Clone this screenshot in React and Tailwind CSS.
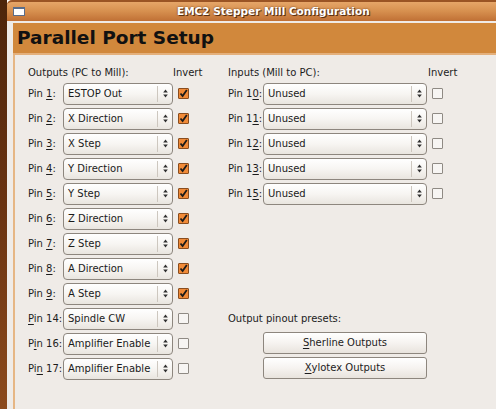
import React from "react";

const outputs = [
  { pre: "Pin ", u: "1", post: ":", value: "ESTOP Out", checked: true },
  { pre: "Pin ", u: "2", post: ":", value: "X Direction", checked: true },
  { pre: "Pin ", u: "3", post: ":", value: "X Step", checked: true },
  { pre: "Pin ", u: "4", post: ":", value: "Y Direction", checked: true },
  { pre: "Pin ", u: "5", post: ":", value: "Y Step", checked: true },
  { pre: "Pin ", u: "6", post: ":", value: "Z Direction", checked: true },
  { pre: "Pin ", u: "7", post: ":", value: "Z Step", checked: true },
  { pre: "Pin ", u: "8", post: ":", value: "A Direction", checked: true },
  { pre: "Pin ", u: "9", post: ":", value: "A Step", checked: true },
  { pre: "", u: "P", post: "in 14:", value: "Spindle CW", checked: false },
  { pre: "P", u: "i", post: "n 16:", value: "Amplifier Enable", checked: false },
  { pre: "Pi", u: "n", post: " 17:", value: "Amplifier Enable", checked: false },
];

const inputs = [
  { pre: "Pin 1", u: "0", post: ":" },
  { pre: "Pin 1", u: "1", post: ":" },
  { pre: "Pin 1", u: "2", post: ":" },
  { pre: "Pin 1", u: "3", post: ":" },
  { pre: "Pin 1", u: "5", post: ":" },
];

const Arrows = () => (
  <svg width="5" height="9" viewBox="0 0 5 9">
    <path d="M2.5 0.5 L4.8 3.5 L0.2 3.5 Z" fill="#2e2e2e" />
    <path d="M2.5 8.5 L4.8 5.5 L0.2 5.5 Z" fill="#2e2e2e" />
  </svg>
);

const Combo = ({ value, width }) => (
  <div
    className={`flex h-[22px] items-center rounded-[4px] border border-[#8d867e] bg-gradient-to-b from-[#ffffff] via-[#f7f5f2] to-[#e9e5df] ${width}`}
  >
    <span className="flex-1 truncate pl-[4px] text-[#1a1a1a]">{value}</span>
    <div className="flex h-[16px] w-[15px] items-center justify-center border-l border-[#cdc7bf]">
      <Arrows />
    </div>
  </div>
);

const Check = ({ checked }) =>
  checked ? (
    <div className="flex h-[11px] w-[11px] items-center justify-center rounded-[1px] border border-[#8a4d1e] bg-[#f08a38]">
      <svg width="9" height="9" viewBox="0 0 9 9">
        <path d="M1.5 4.5 L3.6 7 L7.8 1" stroke="#1a1a1a" strokeWidth="1.8" fill="none" />
      </svg>
    </div>
  ) : (
    <div className="h-[11px] w-[11px] rounded-[1px] border border-[#8f8a84] bg-[#f7f5f3]" />
  );

const Label = ({ pre, u, post }) => (
  <span className="whitespace-pre">
    {pre}
    <u className="underline-offset-[2px]">{u}</u>
    {post}
  </span>
);

const Button = ({ u, rest }) => (
  <div className="flex h-[22px] w-[164px] items-center justify-center rounded-[3px] border border-[#8d867e] bg-gradient-to-b from-[#ffffff] via-[#f6f3f0] to-[#e8e3dd]">
    <span className="whitespace-pre">
      <u className="underline-offset-[2px]">{u}</u>
      {rest}
    </span>
  </div>
);

export default function App() {
  return (
    <div
      className="flex h-[409px] w-[496px] overflow-hidden text-[10px] text-[#1c1c1c]"
      style={{ fontFamily: '"DejaVu Sans", "Liberation Sans", sans-serif' }}
    >
      <div className="w-[7px] bg-gradient-to-b from-[#4d250b] via-[#6a3311] to-[#8c4a1c]" />
      <div className="flex flex-1 flex-col">
        {/* title bar */}
        <div className="relative flex h-[21px] items-center rounded-tl-[5px] border-t-2 border-[#9a5424] bg-gradient-to-b from-[#e6a668] via-[#d68f4e] to-[#c07035]">
          <div className="ml-[6px] h-[9px] w-[12px] border border-[#5a6d8a] border-t-2 bg-white" />
          <div
            className="absolute left-[170px] font-bold text-[10.5px] text-white"
            style={{ textShadow: "1px 1px 0 #5a2e10, 0 0 2px #6a3a18" }}
          >
            EMC2 Stepper Mill Configuration
          </div>
        </div>
        <div className="flex flex-1 flex-col bg-[#efebe7] pt-[2px] pl-[6px]">
          {/* header */}
          <div className="flex h-[32px] items-center border-b-2 border-[#e4b07c] bg-[#d1883c] pl-[4px]">
            <span className="text-[18.5px] font-bold text-[#111]">
              Parallel Port Setup
            </span>
          </div>
          <div className="flex flex-1 border-l-2 border-[#e6b684] pl-[13px] pt-[9px]">
            {/* outputs */}
            <div className="flex w-[200px] flex-col">
              <div className="flex h-[17px] items-center">
                <span className="w-[145px]">Outputs (PC to Mill):</span>
                <span>Invert</span>
              </div>
              {outputs.map((o, i) => (
                <div key={i} className="flex h-[25px] items-center">
                  <div className="w-[35px]">
                    <Label pre={o.pre} u={o.u} post={o.post} />
                  </div>
                  <Combo value={o.value} width="w-[110px]" />
                  <div className="pl-[5px]">
                    <Check checked={o.checked} />
                  </div>
                </div>
              ))}
            </div>
            {/* inputs */}
            <div className="flex flex-col">
              <div className="flex h-[17px] items-center">
                <span className="w-[200px]">Inputs (Mill to PC):</span>
                <span>Invert</span>
              </div>
              {inputs.map((o, i) => (
                <div key={i} className="flex h-[25px] items-center">
                  <div className="w-[35px]">
                    <Label pre={o.pre} u={o.u} post={o.post} />
                  </div>
                  <Combo value="Unused" width="w-[164px]" />
                  <div className="pl-[5px]">
                    <Check checked={false} />
                  </div>
                </div>
              ))}
              <div className="h-[100px]" />
              <div className="flex h-[24px] items-center">Output pinout presets:</div>
              <div className="flex h-[25px] items-center pl-[35px]">
                <Button u="S" rest="herline Outputs" />
              </div>
              <div className="flex h-[25px] items-center pl-[35px]">
                <Button u="X" rest="ylotex Outputs" />
              </div>
            </div>
          </div>
        </div>
      </div>
    </div>
  );
}
